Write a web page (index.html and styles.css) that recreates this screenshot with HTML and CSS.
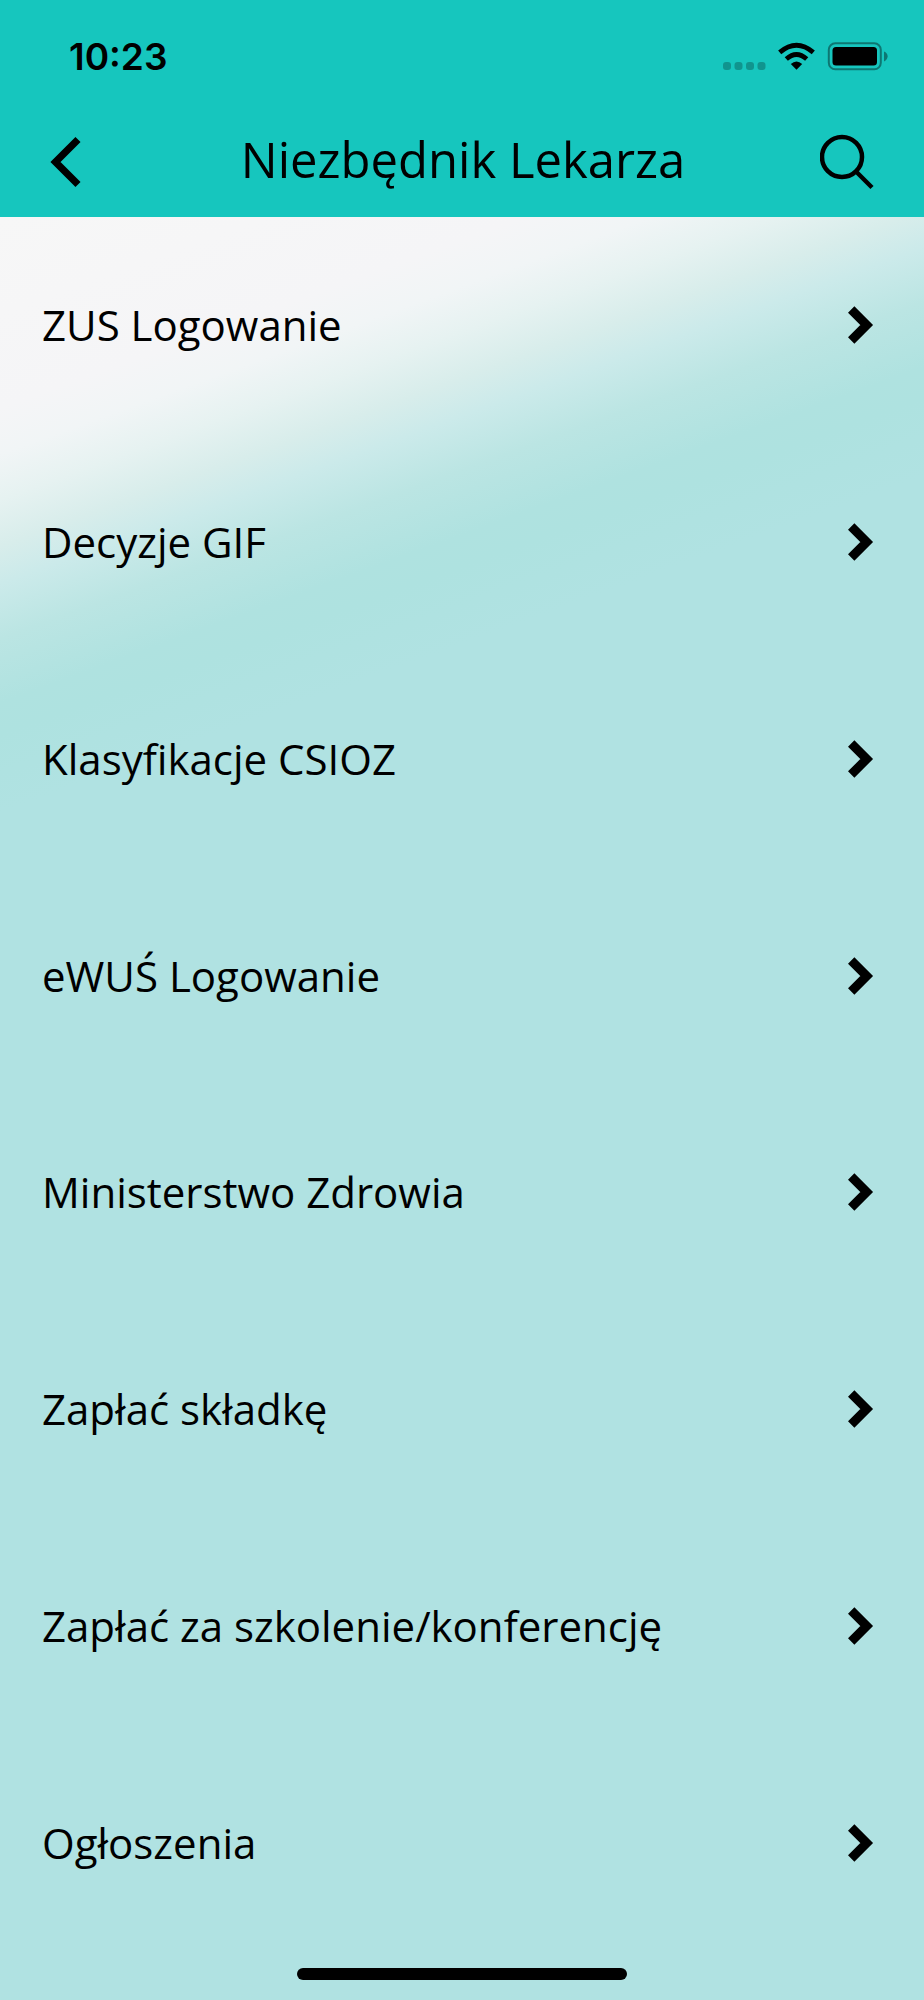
FILE: index.html
```html
<!DOCTYPE html>
<html lang="pl">
<head>
<meta charset="utf-8">
<meta name="viewport" content="width=device-width, initial-scale=1">
<title>Niezbędnik Lekarza</title>
<link rel="stylesheet" href="styles.css">
</head>
<body>
<div class="screen">
  <header class="header">
    <div class="status">
      <time class="clock">10:23</time>
      <svg class="status-icons" width="166" height="32" viewBox="0 0 166 32" aria-hidden="true">
        <g fill="#000" fill-opacity=".25">
          <rect x="0" y="21" width="8" height="8" rx="3"/>
          <rect x="11.500" y="21" width="8" height="8" rx="3"/>
          <rect x="23" y="21" width="8" height="8" rx="3"/>
          <rect x="34.500" y="21" width="8" height="8" rx="3"/>
        </g>
        <path d="M73.500 28.700 67.800 23Q73.500 18 79.200 23Z"/>
        <g fill="none" stroke="#000" stroke-width="4.800">
          <path d="M63.300 18Q73.500 9 83.700 18"/>
          <path d="M56.700 11.300Q73.500-3 90.300 11.300"/>
        </g>
        <rect x="105.800" y="2.300" width="52" height="26" rx="6.500" fill="none" stroke="#000" stroke-opacity=".4" stroke-width="2"/>
        <rect x="109.500" y="6" width="44.500" height="18.500" rx="3.500"/>
        <path d="M161 10.500Q164.600 12 164.600 15.300T161 20.500Z" fill-opacity=".4"/>
      </svg>
    </div>
    <div class="nav">
      <button class="icon-button" type="button" aria-label="Wstecz">
        <svg width="32" height="52" viewBox="0 0 32 52"><path d="M28 3.500 5.500 26 28 48.500" fill="none" stroke="#000" stroke-width="7.200"/></svg>
      </button>
      <h1 class="title">Niezbędnik Lekarza</h1>
      <button class="icon-button" type="button" aria-label="Szukaj">
        <svg width="56" height="58" viewBox="0 0 56 58" fill="none" stroke="#000" stroke-width="4.500"><circle cx="22" cy="24" r="20"/><path d="M36 38.500 52 54.500"/></svg>
      </button>
    </div>
  </header>
  <main class="content">
    <svg class="defs" width="0" height="0" aria-hidden="true"><symbol id="chevron" viewBox="0 0 28 40"><path d="M4.200 4.500 19.700 20 4.200 35.500" fill="none" stroke="#000" stroke-width="9"/></symbol></svg>
    <ul class="list">
      <li class="item"><a class="row" href="#zus">ZUS Logowanie<svg class="chevron"><use href="#chevron"/></svg></a></li>
      <li class="item"><a class="row" href="#gif">Decyzje GIF<svg class="chevron"><use href="#chevron"/></svg></a></li>
      <li class="item"><a class="row" href="#csioz">Klasyfikacje CSIOZ<svg class="chevron"><use href="#chevron"/></svg></a></li>
      <li class="item"><a class="row" href="#ewus">eWUŚ Logowanie<svg class="chevron"><use href="#chevron"/></svg></a></li>
      <li class="item"><a class="row" href="#mz">Ministerstwo Zdrowia<svg class="chevron"><use href="#chevron"/></svg></a></li>
      <li class="item"><a class="row" href="#skladka">Zapłać składkę<svg class="chevron"><use href="#chevron"/></svg></a></li>
      <li class="item"><a class="row" href="#szkolenie">Zapłać za szkolenie/konferencję<svg class="chevron"><use href="#chevron"/></svg></a></li>
      <li class="item"><a class="row" href="#ogloszenia">Ogłoszenia<svg class="chevron"><use href="#chevron"/></svg></a></li>
    </ul>
    <div class="home-indicator"></div>
  </main>
</div>
</body>
</html>
```
FILE: styles.css
```css
* {
  box-sizing: border-box;
}

body {
  margin: 0;
  color: #000;
  font-family: "Open Sans", "Noto Sans", sans-serif;
}

.screen {
  display: flex;
  flex-direction: column;
  min-height: 100vh;
}

.header {
  padding-bottom: 14px;
  background: #16c6be;
}

.status {
  display: flex;
  justify-content: space-between;
  align-items: center;
  height: 79px;
  padding: 34px 35px 0 69px;
}

.clock {
  font: 600 37px/44px Inter, sans-serif;
}

.nav {
  display: flex;
  justify-content: space-between;
  align-items: center;
  height: 124px;
  padding: 42px 48px 0 50px;
}

.icon-button {
  display: flex;
  width: 60px;
  padding: 0;
  border: 0;
  background: none;
  cursor: pointer;
}

.icon-button:last-child {
  justify-content: flex-end;
}

.title {
  margin: 0;
  padding-bottom: 6px;
  font-size: 49px;
  font-weight: 400;
  line-height: 68px;
}

.content {
  display: flex;
  flex: 1;
  flex-direction: column;
  background: linear-gradient(160deg, #f7f7f7 0, #f5f5f7 180px, #f1f5f6 223px, #e6f2f1 266px, #d8edeb 309px, #cbeaea 345px, #bbe5e3 396px, #afe2e0 457px, #aee2e0 486px, #b0e2e2 560px);
}

.defs {
  display: block;
}

.list {
  display: flex;
  flex: 1;
  flex-direction: column;
  margin: 0;
  padding: 0;
  list-style: none;
}

.item {
  display: flex;
  flex: 1;
}

.row {
  display: flex;
  flex: 1;
  justify-content: space-between;
  align-items: center;
  padding: 0 49px 0 42px;
  color: inherit;
  font-size: 42px;
  line-height: 58px;
  text-decoration: none;
}

.chevron {
  width: 28px;
  height: 40px;
}

.home-indicator {
  width: 330px;
  height: 12px;
  margin: 17px auto 20px;
  border-radius: 6px;
  background: #000;
}
```
